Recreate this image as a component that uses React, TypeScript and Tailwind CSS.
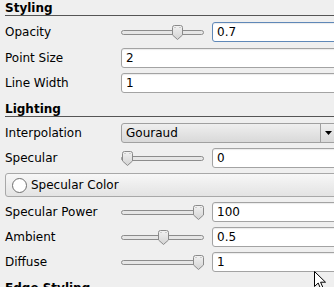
import React from "react";

function Header({ title }: { title: string }) {
  return (
    <div className="h-[15px] border-b border-[#555555] font-bold leading-[14px]">
      {title}
    </div>
  );
}

function Field({ value, focused }: { value: string; focused?: boolean }) {
  return (
    <div
      className={`h-[20px] flex-1 rounded-[3px] border bg-white pl-[4px] leading-[18px] shadow-[inset_0_1px_1px_rgba(0,0,0,0.08)] ${
        focused ? "border-[#5f88b8]" : "border-[#a3a3a3]"
      }`}
    >
      {value}
    </div>
  );
}

function Slider({ value }: { value: number }) {
  return (
    <div className="relative flex h-[20px] w-[83px] shrink-0 items-center">
      <div className="h-[5px] w-full rounded-full border border-[#8c8c8c] bg-[#e6e6e6]" />
      <svg
        className="absolute top-[3px]"
        style={{ left: 1 + value * 71 }}
        width="11"
        height="15"
        viewBox="0 0 11 15"
      >
        <defs>
          <linearGradient id="hg" x1="0" y1="0" x2="0" y2="1">
            <stop offset="0" stopColor="#f2f2f2" />
            <stop offset="1" stopColor="#d2d2d2" />
          </linearGradient>
        </defs>
        <path
          d="M0.5 2.5 Q0.5 0.5 2.5 0.5 H8.5 Q10.5 0.5 10.5 2.5 V10 L5.5 14.5 L0.5 10 Z"
          fill="url(#hg)"
          stroke="#8a8a8a"
        />
        <rect x="2.5" y="2" width="1" height="1" fill="#a8a8a8" />
        <rect x="7.5" y="2" width="1" height="1" fill="#a8a8a8" />
      </svg>
    </div>
  );
}

function Row({ label, children, className = "" }: { label: string; children: React.ReactNode; className?: string }) {
  return (
    <div className={`flex h-[20px] items-center ${className}`}>
      <div className="w-[116px] shrink-0">{label}</div>
      <div className="flex flex-1 items-center gap-[8px]">{children}</div>
    </div>
  );
}

export default function App() {
  return (
    <div
      className="relative h-[287px] w-[334px] overflow-hidden bg-[#efefef] text-[12px] text-black"
      style={{ fontFamily: '"DejaVu Sans", sans-serif' }}
    >
      <div className="flex w-[338px] flex-col pl-[5px] pt-[1px]">
        <Header title="Styling" />
        <Row label="Opacity" className="mt-[6px]">
          <Slider value={0.7} />
          <Field value="0.7" focused />
        </Row>
        <Row label="Point Size" className="mt-[6px]">
          <Field value="2" />
        </Row>
        <Row label="Line Width" className="mt-[5px]">
          <Field value="1" />
        </Row>

        <div className="mt-[9px]">
          <Header title="Lighting" />
        </div>
        <Row label="Interpolation" className="mt-[6px]">
          <div className="flex h-[20px] flex-1 items-stretch rounded-[3px] border border-[#a0a0a0] bg-gradient-to-b from-[#efefef] to-[#d9d9d9]">
            <div className="flex-1 pl-[4px] leading-[18px]">Gouraud</div>
            <div className="flex w-[17px] items-center border-l border-[#a0a0a0] pl-[4px]">
              <svg width="7" height="4" viewBox="0 0 7 4">
                <path d="M0 0 H7 L3.5 4 Z" fill="#000" />
              </svg>
            </div>
          </div>
        </Row>
        <Row label="Specular" className="mt-[5px]">
          <Slider value={0} />
          <Field value="0" />
        </Row>
        <div className="mt-[5px] flex h-[24px] items-center gap-[4px] rounded-[3px] border border-[#a8a8a8] bg-gradient-to-b from-[#f7f7f7] to-[#e3e3e3] pl-[6px]">
          <div className="h-[15px] w-[15px] rounded-full border border-[#6e6e6e] bg-white" />
          <span>Specular Color</span>
        </div>
        <Row label="Specular Power" className="mt-[5px]">
          <Slider value={1} />
          <Field value="100" />
        </Row>
        <Row label="Ambient" className="mt-[5px]">
          <Slider value={0.5} />
          <Field value="0.5" />
        </Row>
        <Row label="Diffuse" className="mt-[5px]">
          <Slider value={1} />
          <Field value="1" />
        </Row>

        <div className="mt-[9px]">
          <Header title="Edge Styling" />
        </div>
      </div>

      <svg className="absolute left-[314px] top-[271px]" width="13" height="20" viewBox="0 0 13 20">
        <path
          d="M0.5 0.5 L0.5 15.5 L4.2 12 L6.8 18.2 L9.2 17.2 L6.6 11.2 L11.5 11.2 Z"
          fill="#fff"
          stroke="#000"
          strokeLinejoin="round"
        />
      </svg>
    </div>
  );
}
